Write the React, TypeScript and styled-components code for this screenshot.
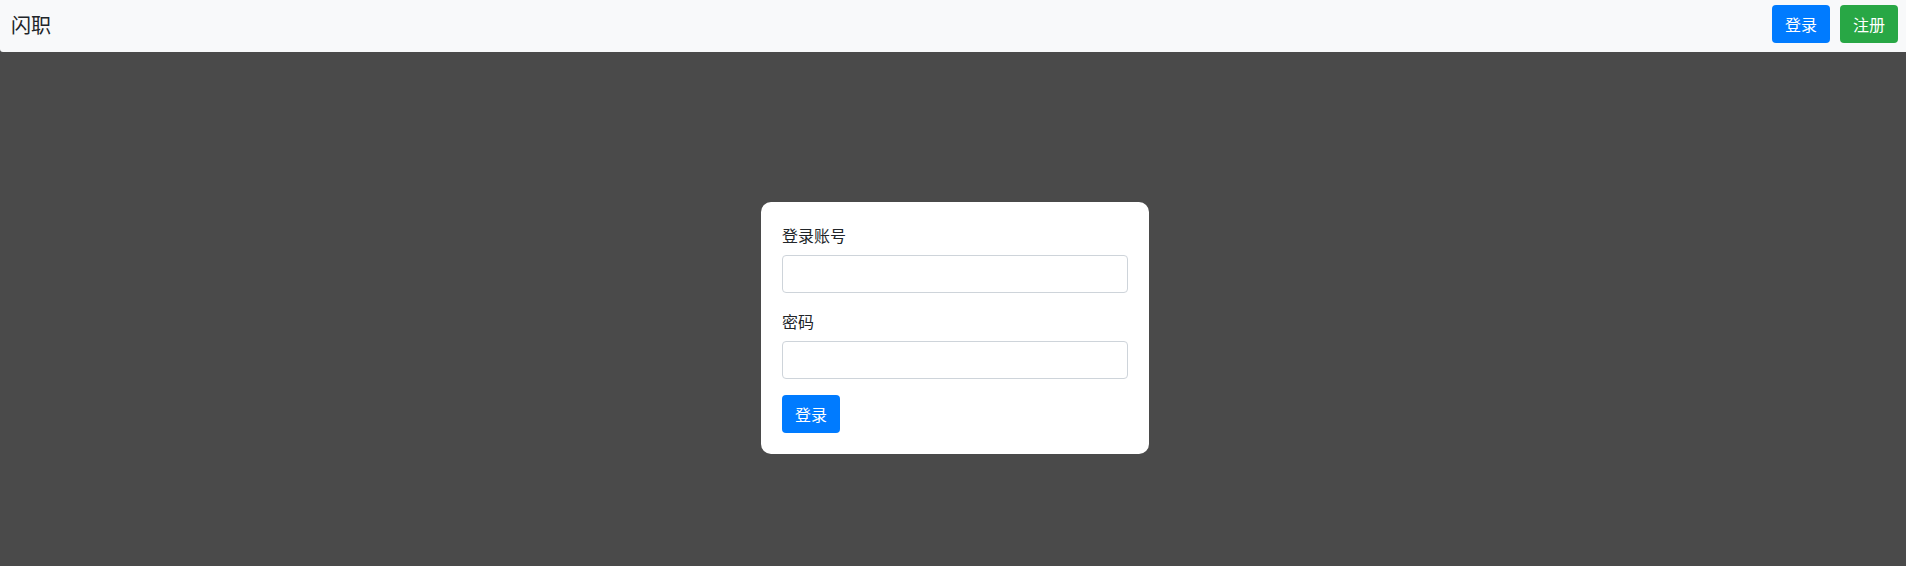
import React from "react";
import styled, { createGlobalStyle } from "styled-components";

const GlobalStyle = createGlobalStyle`
  html, body {
    margin: 0;
    padding: 0;
    height: 100%;
    background: #4a4a4a;
  }
  body {
    font-family: "Noto Sans CJK SC", "Noto Sans", "Liberation Sans", sans-serif;
    color: #212529;
    font-size: 16px;
  }
  #root { min-height: 100%; }
  * { box-sizing: border-box; }
`;

const Page = styled.div`
  min-height: 566px;
  display: flex;
  flex-direction: column;
`;

const NavBar = styled.nav`
  height: 52px;
  background: #f8f9fa;
  display: flex;
  align-items: center;
  justify-content: space-between;
  padding: 0 8px 4px 11px;
  border-bottom-left-radius: 3px;
`;

const Brand = styled.a`
  font-size: 20px;
  line-height: 24px;
  color: #212529;
  text-decoration: none;
  margin-top: 2px;
`;

const NavActions = styled.div`
  display: flex;
  gap: 10px;
`;

const Button = styled.button<{ $variant: "primary" | "success" }>`
  height: 38px;
  min-width: 58px;
  padding: 0 12px;
  border: none;
  border-radius: 4px;
  font-family: inherit;
  font-size: 16px;
  line-height: 24px;
  color: #fff;
  cursor: pointer;
  background: ${(p) => (p.$variant === "primary" ? "#007bff" : "#28a745")};
`;

const Main = styled.main`
  flex: 1;
  display: flex;
  justify-content: center;
  padding-top: 150px;
  padding-left: 4px;
`;

const Card = styled.form`
  width: 388px;
  height: 252px;
  background: #fff;
  border-radius: 10px;
  padding: 21px 21px;
  display: flex;
  flex-direction: column;
`;

const FormGroup = styled.div`
  display: flex;
  flex-direction: column;
  margin-bottom: 16px;
`;

const Label = styled.label`
  font-size: 16px;
  line-height: 24px;
  margin-bottom: 8px;
  color: #212529;
`;

const Input = styled.input`
  height: 38px;
  width: 100%;
  border: 1px solid #ced4da;
  border-radius: 4px;
  padding: 6px 12px;
  font-family: inherit;
  font-size: 16px;
  background: #fff;
`;

const SubmitRow = styled.div`
  display: flex;
`;

export default function App() {
  return (
    <>
      <GlobalStyle />
      <Page>
        <NavBar>
          <Brand href="#">闪职</Brand>
          <NavActions>
            <Button $variant="primary" type="button">登录</Button>
            <Button $variant="success" type="button">注册</Button>
          </NavActions>
        </NavBar>
        <Main>
          <Card onSubmit={(e) => e.preventDefault()}>
            <FormGroup>
              <Label>登录账号</Label>
              <Input type="text" />
            </FormGroup>
            <FormGroup>
              <Label>密码</Label>
              <Input type="password" />
            </FormGroup>
            <SubmitRow>
              <Button $variant="primary" type="submit">登录</Button>
            </SubmitRow>
          </Card>
        </Main>
      </Page>
    </>
  );
}
